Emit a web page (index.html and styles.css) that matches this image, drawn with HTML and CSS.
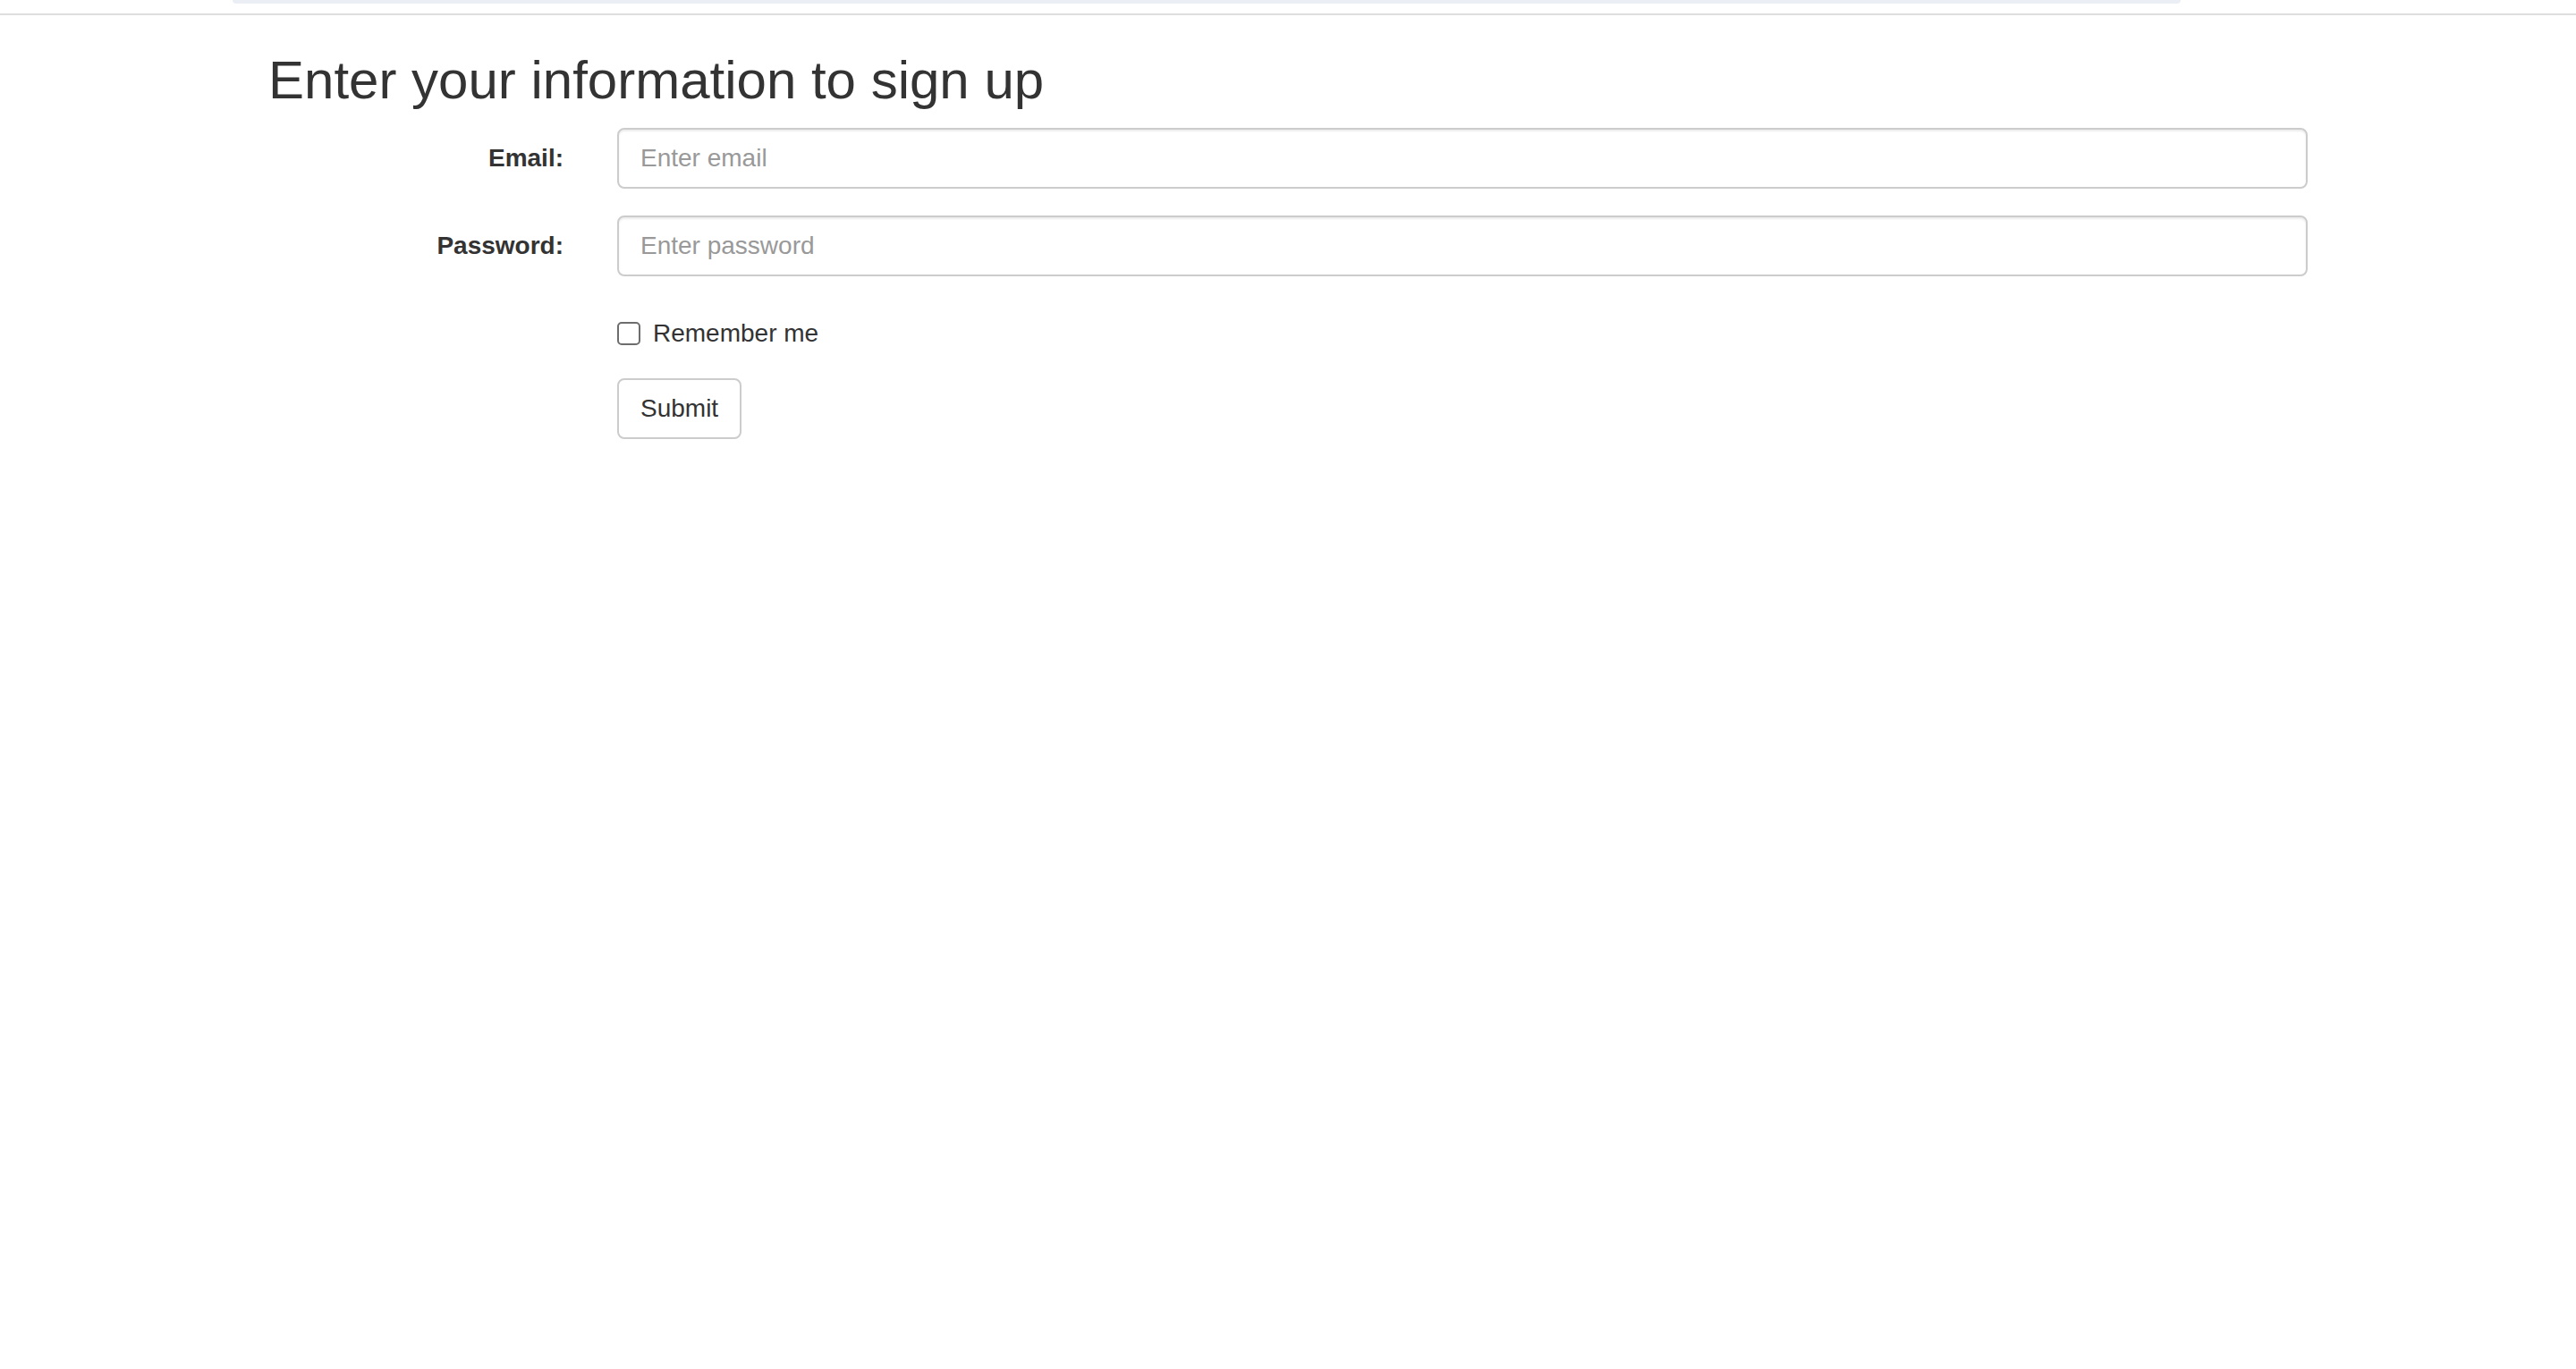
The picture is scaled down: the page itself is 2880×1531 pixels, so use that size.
FILE: index.html
```html
<!DOCTYPE html>
<html lang="en">
<head>
<meta charset="utf-8">
<title>Sign up</title>
<link rel="stylesheet" href="styles.css">
</head>
<body>
<div class="topbar">
  <div class="topbar-strip"></div>
</div>
<div class="container">
  <h2 class="title">Enter your information to sign up</h2>
  <form class="form-horizontal">
    <div class="form-group">
      <label class="control-label" for="email">Email:</label>
      <input class="form-control" type="email" id="email" placeholder="Enter email">
    </div>
    <div class="form-group">
      <label class="control-label" for="pwd">Password:</label>
      <input class="form-control" type="password" id="pwd" placeholder="Enter password">
    </div>
    <div class="form-group">
      <div class="offset checkbox">
        <label class="check-label"><input class="check-input" type="checkbox"> Remember me</label>
      </div>
    </div>
    <div class="form-group">
      <div class="offset">
        <button type="submit" class="btn">Submit</button>
      </div>
    </div>
  </form>
</div>
</body>
</html>
```

FILE: styles.css
```css
* {
  box-sizing: border-box;
}

html, body {
  margin: 0;
  padding: 0;
  background: #ffffff;
}

body {
  font-family: "Liberation Sans", Arial, Helvetica, sans-serif;
  font-size: 28px;
  line-height: 40px;
  color: #333333;
}

.topbar {
  height: 17px;
  border-bottom: 2px solid #dedede;
}

.topbar-strip {
  margin-left: 260px;
  width: 2178px;
  height: 4px;
  background: #ebeef4;
  border-radius: 0 0 14px 14px;
}

.container {
  width: 2340px;
  margin: 0 auto;
  padding: 0 30px;
}

.title {
  font-size: 60px;
  line-height: 66px;
  font-weight: 400;
  margin: 40px 0 20px;
  color: #333333;
}

.form-horizontal {
  margin: 0;
}

.form-group {
  display: grid;
  grid-template-columns: 330px 1fr;
  column-gap: 60px;
  margin-bottom: 30px;
}

.control-label {
  padding-top: 14px;
  text-align: right;
  font-weight: 700;
  font-size: 28px;
  line-height: 40px;
}

.form-control {
  display: block;
  width: 100%;
  height: 68px;
  padding: 12px 24px;
  font-family: "Liberation Sans", Arial, Helvetica, sans-serif;
  font-size: 28px;
  line-height: 40px;
  color: #555555;
  background: #ffffff;
  border: 2px solid #cccccc;
  border-radius: 8px;
  box-shadow: inset 0 2px 2px rgba(0, 0, 0, 0.075);
  outline: none;
}

.form-control::placeholder {
  color: #999999;
}

.offset {
  grid-column: 2;
}

.checkbox {
  padding-top: 14px;
  min-height: 54px;
}

.check-label {
  display: flex;
  align-items: flex-start;
  font-weight: 400;
  line-height: 40px;
  gap: 14px;
}

.check-input {
  appearance: none;
  -webkit-appearance: none;
  width: 26px;
  height: 26px;
  margin: 7px 0 0 0;
  border: 2px solid #6d6d6d;
  border-radius: 5px;
  background: #ffffff;
  flex: none;
}

.btn {
  display: inline-block;
  height: 68px;
  padding: 12px 24px;
  font-family: "Liberation Sans", Arial, Helvetica, sans-serif;
  font-size: 28px;
  line-height: 40px;
  color: #333333;
  background: #ffffff;
  border: 2px solid #cccccc;
  border-radius: 8px;
  cursor: pointer;
}
```
